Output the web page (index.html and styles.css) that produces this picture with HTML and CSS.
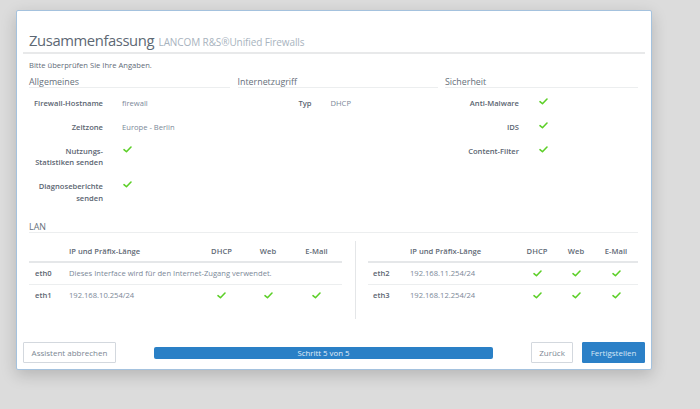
FILE: index.html
```html
<!DOCTYPE html>
<html lang="de">
<head>
<meta charset="utf-8">
<title>Zusammenfassung</title>
<link rel="stylesheet" href="styles.css">
</head>
<body>
<div class="dialog">
  <div class="dlg-head">
    <h1 class="title">Zusammenfassung <span class="subtitle">LANCOM R&amp;S®Unified Firewalls</span></h1>
  </div>
  <div class="dlg-body">
    <p class="intro">Bitte überprüfen Sie Ihre Angaben.</p>
    <div class="summary">
      <section class="group">
        <h2 class="group-title">Allgemeines</h2>
        <dl class="kv">
          <dt>Firewall-Hostname</dt><dd>firewall</dd>
          <dt>Zeitzone</dt><dd>Europe - Berlin</dd>
          <dt>Nutzungs-<br>Statistiken senden</dt><dd><svg class="check" viewBox="0 0 10 8"><polyline points="1,4.2 3.8,6.6 9,1.2"/></svg></dd>
          <dt>Diagnoseberichte<br>senden</dt><dd><svg class="check" viewBox="0 0 10 8"><polyline points="1,4.2 3.8,6.6 9,1.2"/></svg></dd>
        </dl>
      </section>
      <section class="group">
        <h2 class="group-title">Internetzugriff</h2>
        <dl class="kv">
          <dt>Typ</dt><dd>DHCP</dd>
        </dl>
      </section>
      <section class="group">
        <h2 class="group-title">Sicherheit</h2>
        <dl class="kv">
          <dt>Anti-Malware</dt><dd><svg class="check" viewBox="0 0 10 8"><polyline points="1,4.2 3.8,6.6 9,1.2"/></svg></dd>
          <dt>IDS</dt><dd><svg class="check" viewBox="0 0 10 8"><polyline points="1,4.2 3.8,6.6 9,1.2"/></svg></dd>
          <dt>Content-Filter</dt><dd><svg class="check" viewBox="0 0 10 8"><polyline points="1,4.2 3.8,6.6 9,1.2"/></svg></dd>
        </dl>
      </section>
    </div>
    <section class="lan">
      <h2 class="group-title">LAN</h2>
      <div class="lan-tables">
        <table class="iface iface-left">
          <colgroup><col class="c-eth"><col class="c-ip"><col class="c-dhcp"><col class="c-web"><col class="c-mail"></colgroup>
          <thead><tr><th></th><th class="left">IP und Präfix-Länge</th><th>DHCP</th><th>Web</th><th>E-Mail</th></tr></thead>
          <tbody>
            <tr><td class="eth">eth0</td><td class="left" colspan="4">Dieses Interface wird für den Internet-Zugang verwendet.</td></tr>
            <tr><td class="eth">eth1</td><td class="left">192.168.10.254/24</td>
              <td><svg class="check" viewBox="0 0 10 8"><polyline points="1,4.2 3.8,6.6 9,1.2"/></svg></td>
              <td><svg class="check" viewBox="0 0 10 8"><polyline points="1,4.2 3.8,6.6 9,1.2"/></svg></td>
              <td><svg class="check" viewBox="0 0 10 8"><polyline points="1,4.2 3.8,6.6 9,1.2"/></svg></td></tr>
          </tbody>
        </table>
        <div class="vsep"></div>
        <table class="iface iface-right">
          <colgroup><col class="r-eth"><col class="r-ip"><col class="r-dhcp"><col class="r-web"><col class="r-mail"></colgroup>
          <thead><tr><th></th><th class="left">IP und Präfix-Länge</th><th>DHCP</th><th>Web</th><th>E-Mail</th></tr></thead>
          <tbody>
            <tr><td class="eth">eth2</td><td class="left">192.168.11.254/24</td>
              <td><svg class="check" viewBox="0 0 10 8"><polyline points="1,4.2 3.8,6.6 9,1.2"/></svg></td>
              <td><svg class="check" viewBox="0 0 10 8"><polyline points="1,4.2 3.8,6.6 9,1.2"/></svg></td>
              <td><svg class="check" viewBox="0 0 10 8"><polyline points="1,4.2 3.8,6.6 9,1.2"/></svg></td></tr>
            <tr><td class="eth">eth3</td><td class="left">192.168.12.254/24</td>
              <td><svg class="check" viewBox="0 0 10 8"><polyline points="1,4.2 3.8,6.6 9,1.2"/></svg></td>
              <td><svg class="check" viewBox="0 0 10 8"><polyline points="1,4.2 3.8,6.6 9,1.2"/></svg></td>
              <td><svg class="check" viewBox="0 0 10 8"><polyline points="1,4.2 3.8,6.6 9,1.2"/></svg></td></tr>
          </tbody>
        </table>
      </div>
    </section>
  </div>
  <div class="dlg-foot">
    <button class="btn btn-default btn-cancel">Assistent abbrechen</button>
    <div class="progress"><div class="progress-bar">Schritt 5 von 5</div></div>
    <button class="btn btn-default btn-back">Zurück</button>
    <button class="btn btn-primary">Fertigstellen</button>
  </div>
</div>
</body>
</html>
```

FILE: styles.css
```css
* { box-sizing: border-box; }

html, body {
  margin: 0;
  padding: 0;
}

body {
  background: #dcdcdc;
  font-family: "Open Sans", "DejaVu Sans", sans-serif;
  color: #6b7784;
  width: 700px;
  height: 409px;
  overflow: hidden;
  padding: 10px 0 0 16px;
}

.dialog {
  width: 636px;
  height: 360px;
  background: #fff;
  border: 1px solid #a4c2de;
  border-radius: 2px;
  box-shadow: 0 5px 16px rgba(0, 0, 0, 0.18);
  display: flex;
  flex-direction: column;
  padding: 0 6px;
}

.dlg-head {
  padding-top: 18px;
  border-bottom: 2px solid #e8e9ea;
  padding-left: 6px;
}

.title {
  margin: 0;
  font-size: 14.8px;
  line-height: 23px;
  font-weight: 400;
  color: #5d6874;
  letter-spacing: -0.4px;
}

.subtitle {
  font-size: 10px;
  line-height: 1;
  color: #a8b3be;
  letter-spacing: -0.1px;
  margin-left: 1px;
}

.dlg-body {
  padding: 0 7px 0 6px;
}

.intro {
  margin: 6px 0 0;
  font-size: 7.6px;
  line-height: 11px;
  color: #5f6b77;
}

.summary {
  display: grid;
  grid-template-columns: 201px 200px 1fr;
  column-gap: 7.5px;
}

.group-title {
  margin: 5px 0 0;
  font-size: 8.9px;
  line-height: 11px;
  font-weight: 400;
  color: #66707b;
  border-bottom: 1px solid #eceeef;
  padding-bottom: 0;
}

.kv {
  display: grid;
  grid-template-columns: 74px 1fr;
  column-gap: 19px;
  row-gap: 12.5px;
  margin: 9.5px 0 0;
  font-size: 7.6px;
  line-height: 11.5px;
}

.kv dt {
  text-align: right;
  font-weight: 600;
  color: #5b6571;
}

.kv dd {
  margin: 0;
  color: #7b8898;
}

.check {
  width: 9px;
  height: 7px;
  display: inline-block;
  vertical-align: top;
  margin-top: 1px;
  fill: none;
  stroke: #5ccf27;
  stroke-width: 1.8;
  stroke-linecap: round;
  stroke-linejoin: round;
}

.kv dd .check {
  margin-left: 1px;
  margin-top: 0;
}

.lan {
  margin-top: 17px;
}

.lan .group-title {
  margin: 0;
}

.lan-tables {
  display: flex;
  align-items: flex-start;
  margin-top: 8px;
}

.iface {
  border-collapse: collapse;
  table-layout: fixed;
  font-size: 7.6px;
  line-height: 11px;
}

.iface-left { width: 313px; }
.iface-right { width: 270px; }

.c-eth { width: 34px; }
.c-ip { width: 135px; }
.c-dhcp { width: 47px; }
.c-web { width: 46px; }
.c-mail { width: 51px; }

.r-eth { width: 36px; }
.r-ip { width: 112px; }
.r-dhcp { width: 42px; }
.r-web { width: 36px; }
.r-mail { width: 44px; }

.iface th {
  font-weight: 600;
  color: #5f6a76;
  height: 21px;
  padding: 0 6px;
  border-bottom: 2px solid #e5e7e9;
  text-align: center;
}

.iface td {
  height: 22px;
  padding: 0 6px;
  text-align: center;
  color: #7b8898;
  white-space: nowrap;
}

.iface tbody tr + tr td {
  border-top: 1px solid #eceeef;
}

.iface .left { text-align: left; }

.iface td.eth {
  text-align: left;
  font-weight: 600;
  color: #5b6571;
}

.iface-right td.eth { padding-left: 5px; }

.iface td .check { margin-top: 2px; }

.vsep {
  width: 1px;
  height: 78px;
  background: #e4e6e8;
  margin: 0 12px 0 13px;
}

.dlg-foot {
  margin-top: auto;
  display: flex;
  align-items: center;
  padding-bottom: 6px;
}

.btn {
  font-family: inherit;
  font-size: 8px;
  height: 21px;
  border-radius: 1px;
  padding: 0 4px;
  white-space: nowrap;
  cursor: pointer;
}

.btn-default {
  background: #fff;
  border: 1px solid #d3d8de;
  color: #7a8692;
}

.btn-cancel { width: 93px; }
.btn-back { width: 42px; }

.btn-primary {
  background: #2b80c7;
  border: 1px solid #2b80c7;
  color: #d6e7f6;
  margin-left: 9px;
  width: 63px;
}

.progress {
  flex: 1;
  margin: 0 38px;
  height: 12px;
  background: #eef0f2;
  border-radius: 2px;
  overflow: hidden;
}

.progress-bar {
  width: 100%;
  height: 100%;
  background: #2a80c6;
  color: #e2eef9;
  font-size: 7.8px;
  line-height: 12px;
  text-align: center;
}
```
